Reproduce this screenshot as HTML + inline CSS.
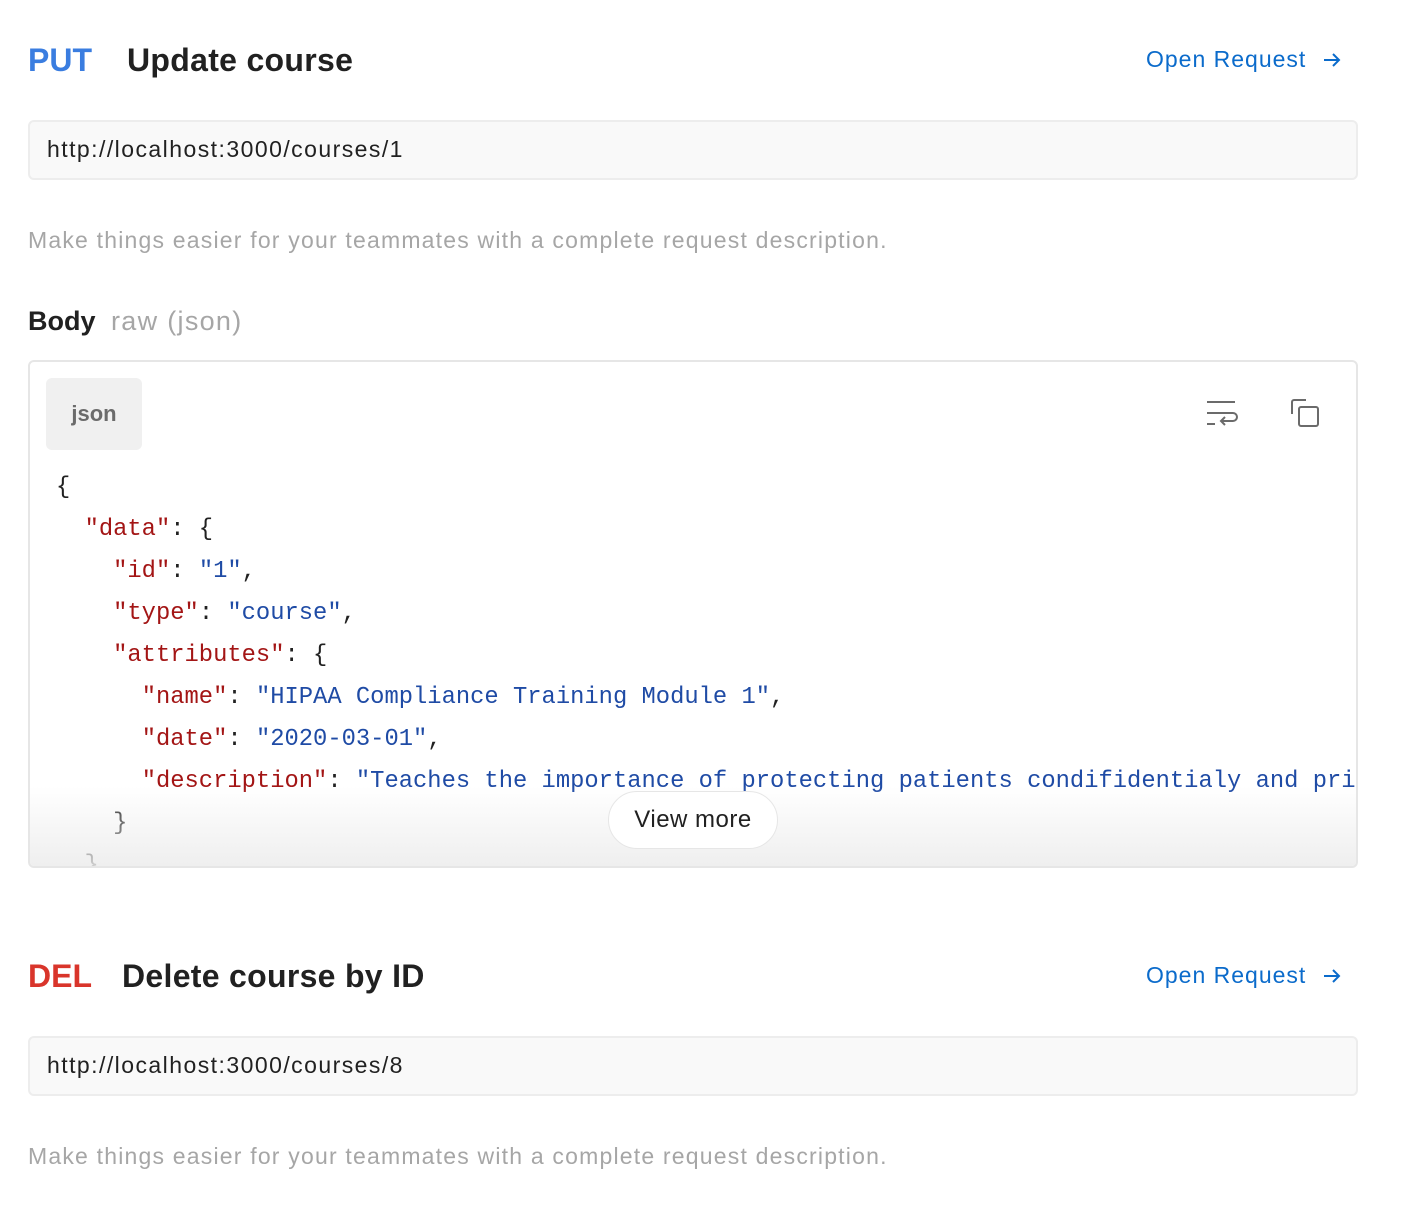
<!DOCTYPE html>
<html><head><style>
*{margin:0;padding:0;box-sizing:border-box}
body{width:1418px;height:1220px;background:#fff;font-family:"Liberation Sans",sans-serif;color:#212121;position:relative;overflow:hidden}
.abs{position:absolute;white-space:nowrap}
.method{font-size:32px;font-weight:bold}
.title{font-size:32px;font-weight:bold;color:#212121}
.open{font-size:23px;color:#0b6bcb;letter-spacing:1px}
.url{position:absolute;left:28px;width:1330px;height:60px;background:#f9f9f9;border:2px solid #ededed;border-radius:6px;font-size:23px;padding:14px 0 0 17px;color:#212121;letter-spacing:1.45px}
.desc{font-size:23px;color:#a6a6a6;letter-spacing:1.2px}
.code{position:absolute;left:28px;top:360px;width:1330px;height:508px;border:2px solid #e6e6e6;border-radius:6px;overflow:hidden}
pre{position:absolute;left:26px;top:105px;font-family:"Liberation Mono",monospace;font-size:23.8px;line-height:42px;color:#212121}
.k{color:#a31515}.s{color:#1f4ba5}
.fade{position:absolute;left:0;right:0;bottom:0;height:80px;background:linear-gradient(to bottom,rgba(255,255,255,0),rgba(236,236,236,0.85))}
</style></head><body>
<div class="abs method" style="left:28px;top:42px;color:#3a7de0">PUT</div>
<div class="abs title" style="left:127px;top:42px;letter-spacing:0.3px">Update course</div>
<div class="abs open" style="left:1146px;top:46px">Open Request</div>
<svg class="abs" style="left:1323px;top:51px" width="18" height="18" viewBox="0 0 18 18" fill="none" stroke="#0b6bcb" stroke-width="2"><path d="M1 9h15M10 3l6 6-6 6"/></svg>
<div class="url" style="top:120px">http://localhost:3000/courses/1</div>
<div class="abs desc" style="left:28px;top:227px">Make things easier for your teammates with a complete request description.</div>
<div class="abs" style="left:28px;top:306px;font-size:27px;font-weight:bold">Body <span style="font-weight:normal;color:#a6a6a6;margin-left:8px;letter-spacing:1.3px">raw (json)</span></div>
<div class="code">
 <div class="abs" style="left:16px;top:16px;width:96px;height:72px;background:#f0f0f0;border-radius:6px;font-size:22px;font-weight:bold;color:#6b6b6b;text-align:center;line-height:72px">json</div>
 <svg class="abs" style="left:1176px;top:38px" width="32" height="30" viewBox="0 0 32 30" fill="none" stroke="#6b6b6b" stroke-width="2"><path d="M1 2h28M1 13h26a4 4 0 0 1 0 8h-11M1 24h8M19 17l-4 4 4 4"/></svg>
 <svg class="abs" style="left:1260px;top:36px" width="32" height="32" viewBox="0 0 32 32" fill="none" stroke="#6b6b6b" stroke-width="2"><path d="M16 2H4a2 2 0 0 0-2 2v12"/><rect x="9" y="9" width="19" height="19" rx="2"/></svg>
 <pre>{
  <span class="k">"data"</span>: {
    <span class="k">"id"</span>: <span class="s">"1"</span>,
    <span class="k">"type"</span>: <span class="s">"course"</span>,
    <span class="k">"attributes"</span>: {
      <span class="k">"name"</span>: <span class="s">"HIPAA Compliance Training Module 1"</span>,
      <span class="k">"date"</span>: <span class="s">"2020-03-01"</span>,
      <span class="k">"description"</span>: <span class="s">"Teaches the importance of protecting patients condifidentialy and privacy"</span>
    }
  }
}</pre>
 <div class="fade"></div>
 <div class="abs" style="left:578px;top:429px;width:170px;height:58px;background:#fff;border:1px solid #e6e6e6;border-radius:29px;font-size:24px;text-align:center;line-height:56px;letter-spacing:0.5px">View more</div>
</div>
<div class="abs method" style="left:28px;top:958px;color:#d9352b">DEL</div>
<div class="abs title" style="left:122px;top:958px;letter-spacing:0.3px">Delete course by ID</div>
<div class="abs open" style="left:1146px;top:962px">Open Request</div>
<svg class="abs" style="left:1323px;top:967px" width="18" height="18" viewBox="0 0 18 18" fill="none" stroke="#0b6bcb" stroke-width="2"><path d="M1 9h15M10 3l6 6-6 6"/></svg>
<div class="url" style="top:1036px">http://localhost:3000/courses/8</div>
<div class="abs desc" style="left:28px;top:1143px">Make things easier for your teammates with a complete request description.</div>
</body></html>
